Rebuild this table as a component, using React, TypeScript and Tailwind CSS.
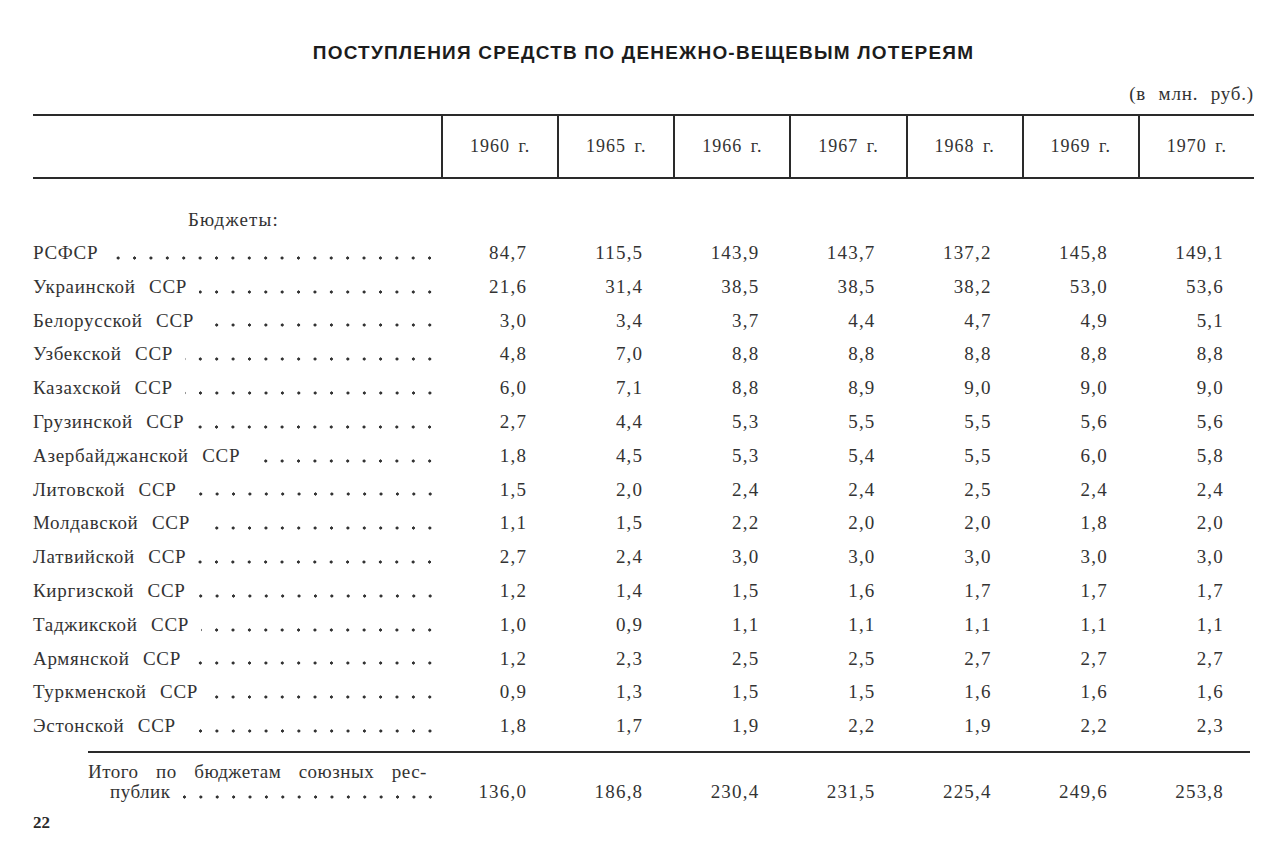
const YEARS = ["1960 г.", "1965 г.", "1966 г.", "1967 г.", "1968 г.", "1969 г.", "1970 г."];

const ROWS: { name: string; values: string[] }[] = [
  { name: "РСФСР", values: ["84,7", "115,5", "143,9", "143,7", "137,2", "145,8", "149,1"] },
  { name: "Украинской ССР", values: ["21,6", "31,4", "38,5", "38,5", "38,2", "53,0", "53,6"] },
  { name: "Белорусской ССР", values: ["3,0", "3,4", "3,7", "4,4", "4,7", "4,9", "5,1"] },
  { name: "Узбекской ССР", values: ["4,8", "7,0", "8,8", "8,8", "8,8", "8,8", "8,8"] },
  { name: "Казахской ССР", values: ["6,0", "7,1", "8,8", "8,9", "9,0", "9,0", "9,0"] },
  { name: "Грузинской ССР", values: ["2,7", "4,4", "5,3", "5,5", "5,5", "5,6", "5,6"] },
  { name: "Азербайджанской ССР", values: ["1,8", "4,5", "5,3", "5,4", "5,5", "6,0", "5,8"] },
  { name: "Литовской ССР", values: ["1,5", "2,0", "2,4", "2,4", "2,5", "2,4", "2,4"] },
  { name: "Молдавской ССР", values: ["1,1", "1,5", "2,2", "2,0", "2,0", "1,8", "2,0"] },
  { name: "Латвийской ССР", values: ["2,7", "2,4", "3,0", "3,0", "3,0", "3,0", "3,0"] },
  { name: "Киргизской ССР", values: ["1,2", "1,4", "1,5", "1,6", "1,7", "1,7", "1,7"] },
  { name: "Таджикской ССР", values: ["1,0", "0,9", "1,1", "1,1", "1,1", "1,1", "1,1"] },
  { name: "Армянской ССР", values: ["1,2", "2,3", "2,5", "2,5", "2,7", "2,7", "2,7"] },
  { name: "Туркменской ССР", values: ["0,9", "1,3", "1,5", "1,5", "1,6", "1,6", "1,6"] },
  { name: "Эстонской ССР", values: ["1,8", "1,7", "1,9", "2,2", "1,9", "2,2", "2,3"] },
];

const TOTAL = ["136,0", "186,8", "230,4", "231,5", "225,4", "249,6", "253,8"];

// dotted leader drawn as a repeating dot pattern, anchored to the right edge
function Leader() {
  return (
    <span className="ml-[12px] mt-[10px] h-[4px] flex-1 self-center bg-[radial-gradient(circle,#333_1.4px,transparent_1.8px)] bg-[length:16.4px_4px] bg-right bg-repeat-x" />
  );
}

function Values({ values }: { values: string[] }) {
  return (
    <>
      {values.map((v, i) => (
        <div key={i} className="pr-[30px] text-right text-[19px] tracking-[1.2px]">
          {v}
        </div>
      ))}
    </>
  );
}

export default function App() {
  return (
    <div className="relative h-[856px] w-[1274px] overflow-hidden bg-white text-[19px] text-[#333] [font-family:Liberation_Serif,Times_New_Roman,serif]">
      <div className="ml-[33px] w-[1221px]">
        <h1 className="pt-[42px] text-center text-[19px] font-bold leading-[22px] tracking-[1.2px] text-[#1c1c1c] [font-family:Liberation_Sans,Arial,sans-serif]">
          ПОСТУПЛЕНИЯ СРЕДСТВ ПО ДЕНЕЖНО-ВЕЩЕВЫМ ЛОТЕРЕЯМ
        </h1>
        <div className="mt-[20px] text-right leading-[20px] tracking-[0.8px] [word-spacing:7px]">(в млн. руб.)</div>

        <div className="mt-[10px] grid grid-cols-[408px_repeat(7,1fr)] border-y-2 border-[#2a2a2a]">
          <div className="h-[61px]" />
          {YEARS.map((y) => (
            <div
              key={y}
              className="flex h-[61px] items-center justify-center border-l-2 border-[#2a2a2a] text-[18px] tracking-[1px] [word-spacing:3px]"
            >
              {y}
            </div>
          ))}
        </div>

        <div className="mt-[29px] pl-[155px] leading-[24px] tracking-[1.2px]">Бюджеты:</div>

        <div className="mt-[4px] grid grid-cols-[408px_repeat(7,1fr)] leading-[33.8px]">
          {ROWS.map((r) => (
            <div key={r.name} className="contents">
              <div className="flex pr-[3px] tracking-[0.7px] [word-spacing:8px]">
                <span>{r.name}</span>
                <Leader />
              </div>
              <Values values={r.values} />
            </div>
          ))}
        </div>

        <div className="ml-[55px] mr-[4px] mt-[8px] border-t-2 border-[#2a2a2a]" />

        <div className="mt-[9px] grid grid-cols-[408px_repeat(7,1fr)] items-end leading-[20px]">
          <div className="tracking-[0.5px]">
            <div className="flex justify-between pl-[55px] pr-[14px]">
              <span>Итого</span>
              <span>по</span>
              <span>бюджетам</span>
              <span>союзных</span>
              <span>рес-</span>
            </div>
            <div className="flex pl-[77px] pr-[3px]">
              <span>публик</span>
              <Leader />
            </div>
          </div>
          <Values values={TOTAL} />
        </div>

        <div className="mt-[11px] text-[17px] font-bold leading-[20px] text-[#2a2a2a]">22</div>
      </div>
    </div>
  );
}
